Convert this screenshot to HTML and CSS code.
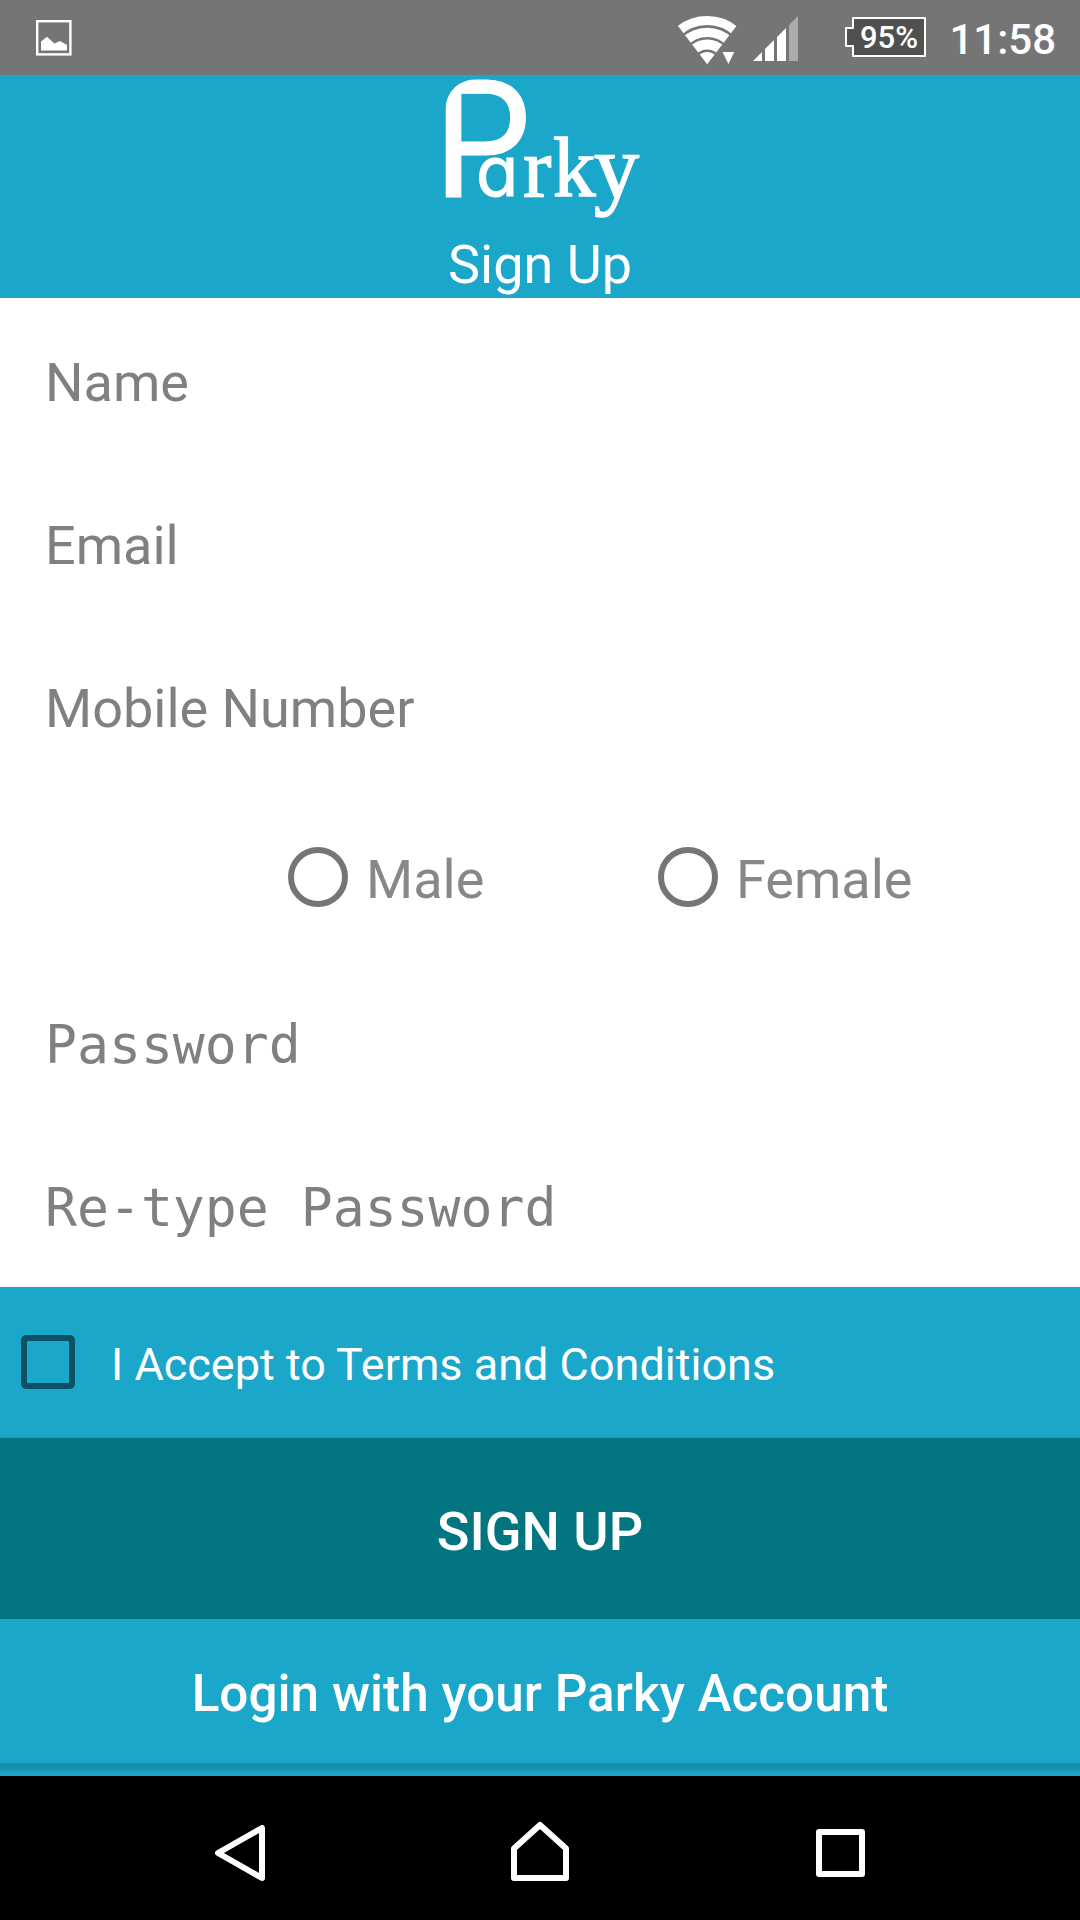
FILE: index.html
```html
<!DOCTYPE html>
<html lang="en">
<head>
<meta charset="utf-8">
<title>Parky – Sign Up</title>
<link rel="stylesheet" href="styles.css">
</head>
<body>
<div class="screen">
  <div class="status">
    <svg class="status-picture" width="36" height="36" viewBox="0 0 36 36"><rect x="1.2" y="1.2" width="33.2" height="33.2" fill="none" stroke="#fff" stroke-width="2.4"/><path d="M5 30.5V21.500l6-4.700 7.500 6.800 5.500-2.600 7 4v5.500z" fill="#fff"/></svg>
    <div class="status-right">
      <svg class="wifi" width="60" height="50" viewBox="0 0 60 50">
        <clipPath id="fan"><path d="M29.2 48.3L-9.5-2.4H67.9z"/></clipPath>
        <g clip-path="url(#fan)" fill="none" stroke="#fff"><circle cx="29.2" cy="48" r="43.5" stroke-width="9"/><circle cx="29.2" cy="48" r="31.7" stroke-width="9.3"/><circle cx="29.2" cy="48" r="19.4" stroke-width="10"/><circle cx="29.2" cy="48" r="12" fill="#fff" stroke="none"/></g>
        <path d="M44.5 36H56.3L50.4 48z" fill="#fff"/>
      </svg>
      <svg class="signal" width="46" height="46" viewBox="0 0 46 46"><path d="M0 45L9 36V45zM12 33L21 24V45H12zM24 21L33 12V45H24z" fill="#fff"/><path d="M36 9L45 0V45H36z" fill="#acacac"/></svg>
      <div class="battery">
        <svg width="82" height="41" viewBox="0 0 82 41"><path d="M8 1H80V39H8V29H1V11H8z" fill="#505050" stroke="#fff" stroke-width="2" stroke-linejoin="round"/></svg>
        <span class="battery-level">95%</span>
      </div>
      <span class="clock">11:58</span>
    </div>
  </div>

  <header class="header">
    <svg class="logo" width="200" height="150" viewBox="0 0 200 150" fill="#fff" stroke="#fff">
      <clipPath id="shoulder"><path d="M5.5 124V36C5.500 16 19 4 39 4H100V124z"/></clipPath>
      <g clip-path="url(#shoulder)"><text class="logo-cap" x="-8" y="122" textLength="102" lengthAdjust="spacingAndGlyphs">P</text></g>
      <text class="logo-round" x="36" y="121">a</text>
      <text class="logo-serif"><tspan x="83" y="121">r</tspan><tspan x="113">k</tspan></text>
      <text class="logo-serif logo-tail" x="154" y="123">y</text>
    </svg>
    <h1 class="title">Sign Up</h1>
  </header>

  <main class="form">
    <div class="field">Name</div>
    <div class="field">Email</div>
    <div class="field">Mobile Number</div>
    <div class="gender">
      <label class="option"><span class="radio"></span><span class="option-text">Male</span></label>
      <label class="option"><span class="radio"></span><span class="option-text">Female</span></label>
    </div>
    <div class="field mono">Password</div>
    <div class="field mono">Re-type Password</div>
  </main>

  <label class="terms"><span class="checkbox"></span><span class="terms-text">I Accept to Terms and Conditions</span></label>
  <button class="signup">SIGN UP</button>
  <button class="login">Login with your Parky Account</button>
  <div class="shadow"></div>

  <nav class="nav">
    <svg width="60" height="64" viewBox="0 0 60 64"><path d="M51 7V57L7 32z"/></svg>
    <svg width="64" height="64" viewBox="0 0 64 64"><path d="M6 57V27.500L32 4 58 27.500V57z"/></svg>
    <svg width="60" height="64" viewBox="0 0 60 64"><path d="M10 11H53V53H10z"/></svg>
  </nav>
</div>
</body>
</html>
```
FILE: styles.css
```css
* { box-sizing: border-box; }

body {
  margin: 0;
  font-family: Roboto, sans-serif;
  background: #000;
}

svg { display: block; flex: none; }

.screen {
  width: 1080px;
  height: 1920px;
  display: flex;
  flex-direction: column;
  overflow: hidden;
  background: #1aa7ca;
}

.screen > * { flex: none; }

/* Status bar */
.status {
  height: 75px;
  background: #757575;
  color: #fff;
  display: flex;
  justify-content: space-between;
  align-items: flex-start;
  padding: 0 24px 0 36px;
}

.status-picture { margin-top: 20px; }

.status-right {
  display: flex;
  align-items: flex-start;
}

.wifi { margin: 16px 15.5px 0 0; }
.signal { margin: 16px 46px 0 0; }

.battery {
  position: relative;
  margin: 17px 22px 0 0;
}

.battery-level {
  position: absolute;
  left: 7px;
  right: 2px;
  top: 2px;
  text-align: center;
  font-size: 31px;
  font-weight: 500;
  line-height: 38px;
}

.clock {
  font-size: 42px;
  font-weight: 500;
  line-height: 80px;
}

/* Header */
.header {
  height: 223px;
  display: flex;
  flex-direction: column;
  align-items: center;
  color: #fff;
}

.logo { height: 150px; margin-bottom: 8px; overflow: visible; }

.logo-cap { font: 400 161px Inter, sans-serif; stroke-width: 1px; }
.logo-round { font: 400 69px Inter, sans-serif; font-feature-settings: "cv11"; stroke-width: 1px; }
.logo-serif { font: 400 85px "Liberation Serif", serif; stroke-width: 1.5px; }
.logo-tail { font-size: 90px; }

.title {
  margin: 0;
  font-size: 54px;
  font-weight: 400;
  line-height: 63px;
}

/* Form */
.form {
  height: 989px;
  padding-top: 3px;
  background: #fff;
  color: #808080;
  font-size: 54px;
  overflow: hidden;
}

.field {
  height: 163px;
  padding-left: 45px;
  line-height: 163px;
}

.mono {
  font-family: "DejaVu Sans Mono", monospace;
  font-size: 53.1px;
}

.gender {
  height: 174px;
  display: flex;
  padding-left: 288px;
}

.option {
  width: 370px;
  display: flex;
  align-items: center;
  color: #888;
}

.radio {
  width: 60px;
  height: 60px;
  margin-right: 18px;
  border: 6px solid #757575;
  border-radius: 50%;
}

.option-text { padding-top: 5px; }

/* Actions */
.terms {
  height: 151px;
  display: flex;
  align-items: center;
  gap: 36px;
  padding: 0 0 2px 21px;
  color: #fff;
  font-size: 45px;
}

.terms-text { padding-top: 6px; }

.checkbox {
  width: 54px;
  height: 54px;
  border: 6px solid #0d5264;
  border-radius: 5px;
}

.signup,
.login {
  border: 0;
  padding: 0;
  color: #fff;
  font-family: inherit;
  font-weight: 500;
}

.signup {
  height: 181px;
  padding-top: 6px;
  background: #027580;
  box-shadow: 0 0 2px rgba(0, 0, 0, 0.25);
  font-size: 54px;
}

.login {
  height: 144px;
  padding-top: 5px;
  background: #1aa7ca;
  font-size: 51.3px;
  position: relative;
}

.shadow {
  height: 13px;
  background: linear-gradient(#178aa8, #178fae 40%, #1aa5c8 80%, #1aa7ca);
}

/* Navigation bar */
.nav {
  height: 144px;
  background: #000;
  display: flex;
  justify-content: space-between;
  align-items: center;
  padding: 10px 211px 0 211px;
}

.nav path {
  fill: none;
  stroke: #fff;
  stroke-width: 6;
  stroke-linejoin: round;
}
```
